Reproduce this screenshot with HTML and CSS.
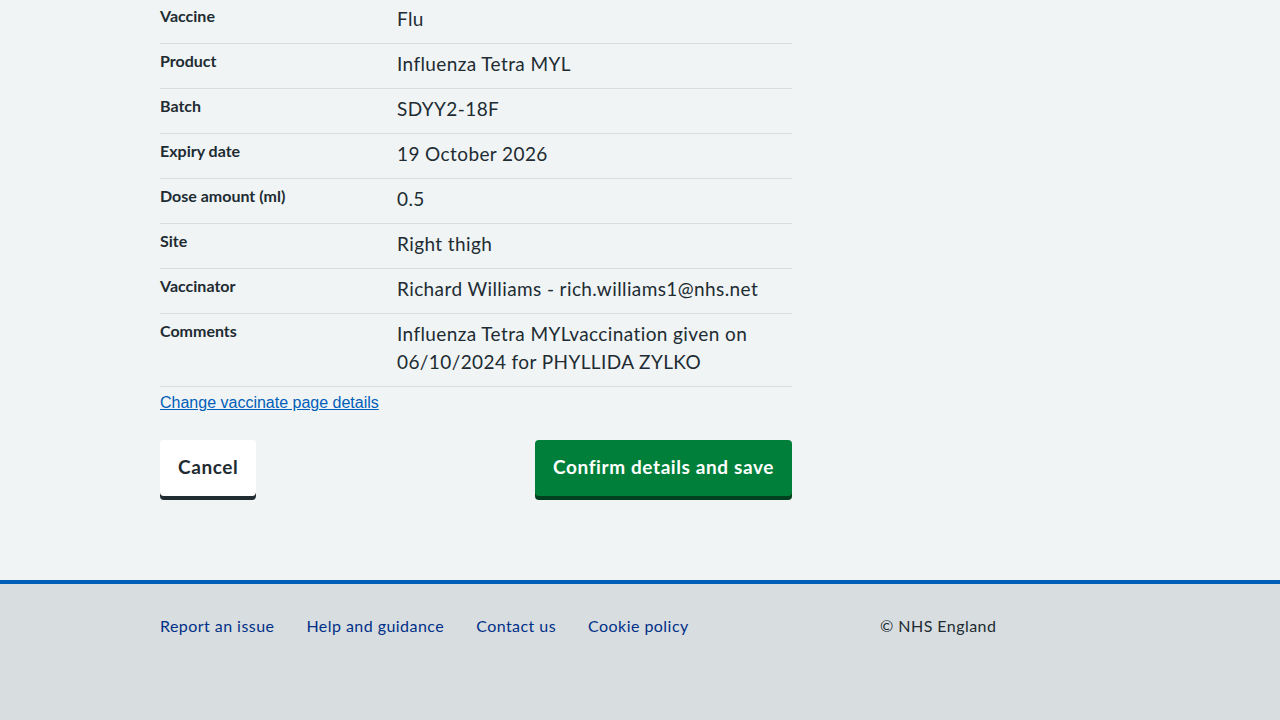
FILE: index.html
```html
<!DOCTYPE html>
<html lang="en">
<head>
<meta charset="utf-8">
<title>Check and confirm</title>
<link rel="stylesheet" href="styles.css">
</head>
<body>
<main class="page">
  <div class="content">
    <dl class="summary">
      <div class="row"><dt class="key">Vaccine</dt><dd class="value">Flu</dd></div>
      <div class="row"><dt class="key">Product</dt><dd class="value">Influenza Tetra MYL</dd></div>
      <div class="row"><dt class="key">Batch</dt><dd class="value">SDYY2-18F</dd></div>
      <div class="row"><dt class="key">Expiry date</dt><dd class="value">19 October 2026</dd></div>
      <div class="row"><dt class="key">Dose amount (ml)</dt><dd class="value">0.5</dd></div>
      <div class="row"><dt class="key">Site</dt><dd class="value">Right thigh</dd></div>
      <div class="row"><dt class="key">Vaccinator</dt><dd class="value">Richard Williams - rich.williams1@nhs.net</dd></div>
      <div class="row"><dt class="key">Comments</dt><dd class="value">Influenza Tetra MYLvaccination given on 06/10/2024 for PHYLLIDA ZYLKO</dd></div>
    </dl>
    <a class="change-link" href="#">Change vaccinate page details</a>
    <div class="actions">
      <button class="btn btn-secondary" type="button">Cancel</button>
      <button class="btn btn-primary" type="button">Confirm details and save</button>
    </div>
  </div>
</main>
<footer class="footer">
  <div class="footer-inner">
    <ul class="footer-links">
      <li><a href="#">Report an issue</a></li>
      <li><a href="#">Help and guidance</a></li>
      <li><a href="#">Contact us</a></li>
      <li><a href="#">Cookie policy</a></li>
    </ul>
    <p class="copyright">© NHS England</p>
  </div>
</footer>
</body>
</html>
```
FILE: styles.css
```css
html, body {
  margin: 0;
  padding: 0;
  background: #f0f4f5;
  color: #212b32;
  font-family: Lato, "Noto Sans", sans-serif;
}

.page {
  width: 960px;
  margin: 0 auto;
  padding-bottom: 84px;
}

.content {
  width: 632px;
}

.summary {
  margin: -1px 0 0 0;
  padding: 0;
}

.row {
  display: grid;
  grid-template-columns: 237px 1fr;
  border-bottom: 1px solid #d8dde0;
}

.key {
  font-size: 16px;
  font-weight: 700;
  line-height: 24px;
  padding: 5px 16px 8px 0;
  margin: 0;
}

.value {
  font-size: 19px;
  line-height: 28px;
  letter-spacing: 0.4px;
  padding: 6px 0 10px 0;
  margin: 0;
}

.change-link {
  display: inline-block;
  margin-top: 6px;
  font-family: "Liberation Sans", Arial, sans-serif;
  font-size: 16px;
  line-height: 20px;
  color: #005eb8;
  text-decoration: underline;
  text-underline-offset: 1px;
}

.actions {
  display: flex;
  justify-content: space-between;
  align-items: flex-start;
  margin-top: 27px;
}

.btn {
  font-family: inherit;
  font-size: 19px;
  font-weight: 700;
  line-height: 28px;
  letter-spacing: 0.6px;
  padding: 11px 16px 13px 16px;
  border: 2px solid transparent;
  border-radius: 4px;
  cursor: pointer;
}

.btn-secondary {
  background: #ffffff;
  color: #212b32;
  box-shadow: 0 4px 0 #212b32;
}

.btn-primary {
  background: #007f3b;
  color: #ffffff;
  box-shadow: 0 4px 0 #00401e;
}

.footer {
  background: #d8dde0;
  border-top: 4px solid #005eb8;
  height: 140px;
}

.footer-inner {
  width: 960px;
  margin: 0 auto;
  display: flex;
  padding-top: 30px;
}

.footer-links {
  list-style: none;
  margin: 0;
  padding: 0;
  width: 720px;
  display: flex;
  gap: 32px;
}

.footer-links a,
.copyright {
  font-size: 16px;
  line-height: 24px;
  letter-spacing: 0.45px;
}

.footer-links a {
  color: #003087;
  text-decoration: none;
}

.copyright {
  margin: 0;
  color: #212b32;
}
```
